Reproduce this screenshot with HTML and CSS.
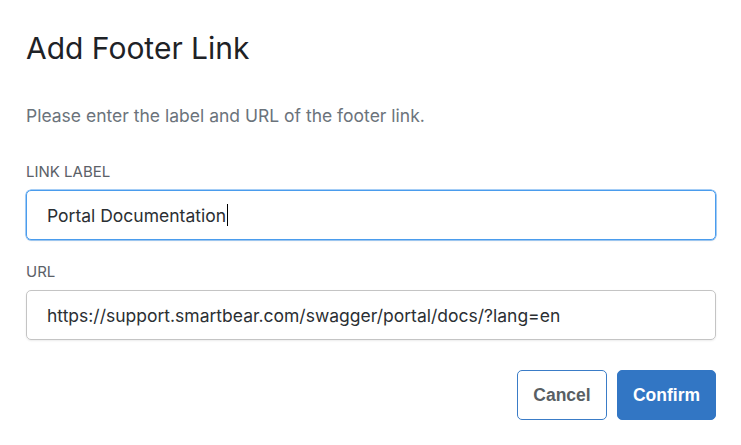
FILE: index.html
```html
<!DOCTYPE html>
<html>
<head>
<meta charset="utf-8">
<link rel="stylesheet" href="styles.css">
</head>
<body>
<div class="dialog">
  <h1 class="title">Add Footer Link</h1>
  <p class="desc">Please enter the label and URL of the footer link.</p>
  <div class="field">
    <label class="label">LINK LABEL</label>
    <div class="input focused">Portal Documentation<span class="caret"></span></div>
  </div>
  <div class="field">
    <label class="label">URL</label>
    <div class="input">https://support.smartbear.com/swagger/portal/docs/?lang=en</div>
  </div>
  <div class="actions">
    <button class="btn btn-secondary">Cancel</button>
    <button class="btn btn-primary">Confirm</button>
  </div>
</div>
</body>
</html>
```
FILE: styles.css
```css
html, body {
  margin: 0;
  padding: 0;
  background: #ffffff;
}
body {
  font-family: Inter, "Noto Sans", sans-serif;
  color: #1f2328;
}
.dialog {
  padding: 28px 25px 0 26px;
  display: flex;
  flex-direction: column;
}
.title {
  margin: 0;
  font-size: 30px;
  font-weight: 400;
  line-height: 40px;
  color: #1e2226;
}
.desc {
  margin: 38px 0 0 0;
  font-size: 17.5px;
  line-height: 20px;
  color: #6b737b;
}
.field {
  display: flex;
  flex-direction: column;
}
.label {
  margin-top: 37px;
  font-size: 15px;
  line-height: 17px;
  color: #5b6168;
}
.field + .field .label {
  margin-top: 23px;
}
.input {
  margin-top: 10px;
  height: 50px;
  box-sizing: border-box;
  border: 1px solid #c4c4c4;
  border-radius: 5px;
  padding: 0 20px;
  display: flex;
  align-items: center;
  font-size: 17.5px;
  color: #2b2f33;
  box-shadow: 0 1px 2px rgba(0,0,0,0.08);
}
.input.focused {
  border-color: #4a9ced;
  box-shadow: 0 0 0 0.5px #4a9ced, 0 1px 2px rgba(0,0,0,0.08);
}
.caret {
  display: inline-block;
  width: 1px;
  height: 22px;
  background: #000;
  margin-left: 1px;
}
.actions {
  display: flex;
  justify-content: flex-end;
  gap: 10px;
  margin-top: 30px;
}
.btn {
  height: 50px;
  box-sizing: border-box;
  border-radius: 5px;
  font-family: "Liberation Sans", Arial, sans-serif;
  font-size: 17.5px;
  font-weight: 700;
  padding: 0 12px;
  cursor: pointer;
}
.btn-secondary {
  width: 90px;
  background: #ffffff;
  border: 1px solid #3a7cc7;
  color: #595f64;
}
.btn-primary {
  width: 99px;
  background: #3276c4;
  border: 1px solid #3276c4;
  color: #ffffff;
}
```
